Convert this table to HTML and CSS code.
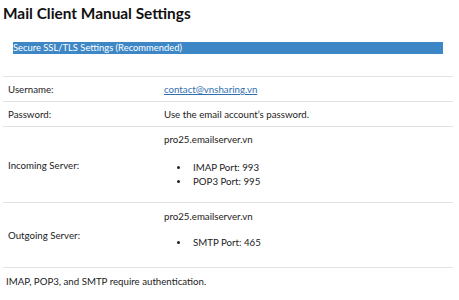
FILE: index.html
```html
<!DOCTYPE html>
<html lang="en">
<head>
    <meta charset="UTF-8">
    <meta name="viewport" content="width=device-width, initial-scale=1.0">
    <title>Mail Client Manual Settings</title>
    <link rel="stylesheet" href="styles.css">
</head>
<body>
<h1 class="page-title">Mail Client Manual Settings</h1>
<div class="banner">Secure SSL/TLS Settings (Recommended)</div>

<div class="settings">
    <div class="setting-row">
        <div class="setting-label">Username:</div>
        <div class="setting-value"><a class="mail-link" href="#">contact@vnsharing.vn</a></div>
    </div>
    <div class="setting-row">
        <div class="setting-label">Password:</div>
        <div class="setting-value">Use the email account’s password.</div>
    </div>
    <div class="setting-row server-in">
        <div class="setting-label">Incoming Server:</div>
        <div class="setting-value">
            <p class="host">pro25.emailserver.vn</p>
            <ul class="ports">
                <li>IMAP Port: 993</li>
                <li>POP3 Port: 995</li>
            </ul>
        </div>
    </div>
    <div class="setting-row server-out">
        <div class="setting-label">Outgoing Server:</div>
        <div class="setting-value">
            <p class="host">pro25.emailserver.vn</p>
            <ul class="ports">
                <li>SMTP Port: 465</li>
            </ul>
        </div>
    </div>
    <div class="setting-note">IMAP, POP3, and SMTP require authentication.</div>
</div>
</body>
</html>
```

FILE: styles.css
```css
html {
    font-family: 'Lato', 'Open Sans', sans-serif;
}
body {
    margin: 0;
    color: #222;
    background: #fff;
}
.page-title {
    margin: 0;
    padding: 3px 3px 0;
    font-size: 15.4px;
    line-height: 20px;
    font-weight: bold;
    color: #111;
}
.banner {
    margin: 19px 16px 0 13px;
    height: 12px;
    line-height: 12px;
    font-size: 9.4px;
    color: #fff;
    background-color: #3d87c6;
}
.settings {
    margin: 22px 6px 0 3px;
    font-size: 9.7px;
}
.setting-row {
    display: grid;
    grid-template-columns: 161px 1fr;
    align-items: center;
    border-top: 1px solid #e2e2e2;
}
.setting-label {
    padding-left: 5px;
}
.setting-value {
    padding: 5px 0;
    line-height: 14px;
}
.mail-link {
    color: #2f6fb0;
}
.host {
    margin: 0;
}
.ports {
    list-style-type: none;
    margin: 0;
    padding: 0;
}
.ports li {
    padding-left: 29px;
    position: relative;
}
.ports li::before {
    content: "";
    position: absolute;
    left: 13px;
    top: 6px;
    width: 3px;
    height: 3px;
    border-radius: 50%;
    background: #222;
}
.server-in .setting-value {
    padding: 5px 0 14px;
}
.server-in .ports {
    margin-top: 14px;
}
.server-out .setting-value {
    padding: 6px 0 18px;
}
.server-out .ports {
    margin-top: 12px;
}
.setting-note {
    border-top: 1px solid #e2e2e2;
    padding: 6px 0 0 3px;
    line-height: 14px;
}
```
